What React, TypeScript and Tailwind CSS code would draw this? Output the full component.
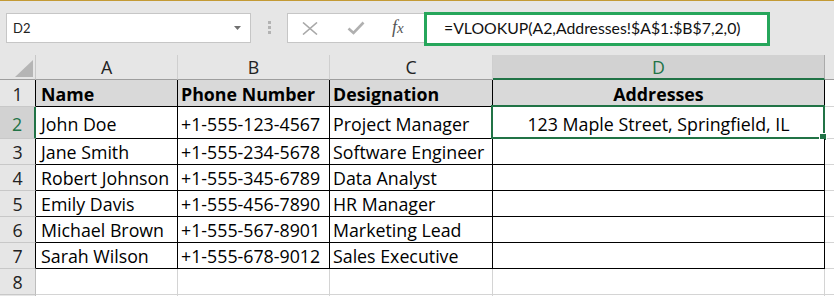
import React from "react";

const FONT = "font-['Open_Sans',sans-serif]";

type Row = { n: number; cells: string[] };

const rows: Row[] = [
  { n: 1, cells: ["Name", "Phone Number", "Designation", "Addresses"] },
  { n: 2, cells: ["John Doe", "+1-555-123-4567", "Project Manager", "123 Maple Street, Springfield, IL"] },
  { n: 3, cells: ["Jane Smith", "+1-555-234-5678", "Software Engineer", ""] },
  { n: 4, cells: ["Robert Johnson", "+1-555-345-6789", "Data Analyst", ""] },
  { n: 5, cells: ["Emily Davis", "+1-555-456-7890", "HR Manager", ""] },
  { n: 6, cells: ["Michael Brown", "+1-555-567-8901", "Marketing Lead", ""] },
  { n: 7, cells: ["Sarah Wilson", "+1-555-678-9012", "Sales Executive", ""] },
];

const padCol = ["pl-[5px]", "pl-[3px]", "pl-[3px]", "justify-center"];

function Toolbar() {
  return (
    <div className="h-[55px] flex flex-col">
      <div className="h-px bg-[#c39a35]" />
      <div className="flex items-start pt-[12px]">
        <div className="ml-[6px] w-[245px] h-[30px] bg-white border border-[#c6c6c6] flex items-center justify-between pl-[6px] pr-[9px]">
          <span className="text-[13px] text-[#222] font-['Lato',sans-serif] pt-px">D2</span>
          <svg width="7" height="4" viewBox="0 0 7 4">
            <path d="M0 0 L7 0 L3.5 4 Z" fill="#707070" />
          </svg>
        </div>
        <div className="ml-[17px] mt-[8px] flex flex-col gap-[2px]">
          <div className="w-[3px] h-[3px] bg-[#b3b3b3]" />
          <div className="w-[3px] h-[3px] bg-[#b3b3b3]" />
          <div className="w-[3px] h-[3px] bg-[#b3b3b3]" />
        </div>
        <div className="ml-[16px] w-[137px] h-[30px] bg-white border border-[#c6c6c6] border-r-0 flex items-center">
          <svg className="ml-[14px]" width="16" height="13" viewBox="0 0 16 13">
            <path d="M1 0.5 L15 12.5 M15 0.5 L1 12.5" stroke="#a8a8a8" strokeWidth="1.6" fill="none" />
          </svg>
          <svg className="ml-[29px]" width="18" height="14" viewBox="0 0 18 14">
            <path d="M1.5 7.5 L6.5 12 L16.5 1.5" stroke="#b0b0b0" strokeWidth="2.6" fill="none" />
          </svg>
          <span className="ml-[27px] text-[18px] italic text-[#555] font-['Liberation_Serif',serif] leading-none -mt-[2px]">
            f<span className="text-[15px]">x</span>
          </span>
        </div>
        <div className="-mt-px w-[346px] h-[34px] bg-white border-[3px] border-[#26a65b] flex items-center pl-[17px] pb-[2px]">
          <span className="text-[15.8px] text-[#111] font-['Lato',sans-serif]">=VLOOKUP(A2,Addresses!$A$1:$B$7,2,0)</span>
        </div>
      </div>
    </div>
  );
}

const rowH: Record<number, string> = {
  1: "h-[27px]",
  2: "h-[32px]",
  3: "h-[26px]",
  4: "h-[26px]",
  5: "h-[26px]",
  6: "h-[26px]",
  7: "h-[26px]",
  8: "h-[26px]",
};

export default function App() {
  return (
    <div className={`w-[834px] h-[296px] bg-[#e6e6e6] overflow-hidden ${FONT}`}>
      <Toolbar />
      <div className="grid grid-cols-[36px_142px_152px_163px_332px_1fr] text-[17.8px]">
        <div className="h-[25px] border-r border-b border-[#9e9e9e] border-r-[#c8c8c8] flex items-end justify-end pr-[2px] pb-[2px]">
          <svg width="18" height="17" viewBox="0 0 18 17">
            <path d="M18 0 L18 17 L0 17 Z" fill="#b5b5b5" />
          </svg>
        </div>
        <div className="h-[25px] border-r border-r-[#cfcfcf] border-b border-b-[#9e9e9e] flex items-center justify-center text-[#222] pt-[1px]">A</div>
        <div className="h-[25px] border-r border-r-[#cfcfcf] border-b border-b-[#9e9e9e] flex items-center justify-center text-[#222] pt-[1px]">B</div>
        <div className="h-[25px] border-r border-r-[#cfcfcf] border-b border-b-[#9e9e9e] flex items-center justify-center text-[#222] pt-[1px]">C</div>
        <div className="h-[25px] bg-[#d2d2d2] border-r border-r-[#ababab] border-b-2 border-b-[#217346] flex items-center justify-center text-[#217346] pt-[2px]">D</div>
        <div className="h-[25px] border-b border-b-[#9e9e9e]" />

        {rows.map((r) => {
          const sel = r.n === 2;
          const head = r.n === 1;
          return (
            <React.Fragment key={r.n}>
              <div
                className={
                  sel
                    ? `${rowH[r.n]} bg-[#d2d2d2] border-r-2 border-r-[#217346] border-b border-b-[#c8c8c8] flex items-center justify-center text-[#217346] pt-[4px]`
                    : `${rowH[r.n]} border-r border-r-black border-b border-b-[#c8c8c8] flex items-center justify-center text-[#222] pt-[2px]`
                }
              >
                {r.n}
              </div>
              {r.cells.map((c, i) => {
                const isD = i === 3;
                return (
                  <div
                    key={i}
                    className={[
                      rowH[r.n],
                      "border-r border-b border-black flex items-center whitespace-nowrap overflow-visible relative",
                      head ? "bg-[#d9d9d9] font-bold" : "bg-white",
                      padCol[i],
                      sel ? "pt-[3px]" : "pt-[2px]",
                      "text-black",
                    ].join(" ")}
                  >
                    {c}
                    {sel && isD && (
                      <>
                        <div className="absolute -top-[2px] -left-[2px] -right-[1px] -bottom-[1px] border-2 border-[#217346] pointer-events-none" />
                        <div className="absolute -right-[3px] -bottom-[3px] w-[6px] h-[6px] bg-[#217346] border border-white box-content" />
                      </>
                    )}
                  </div>
                );
              })}
              <div className={`${rowH[r.n]} bg-white border-b border-b-[#d4d4d4]`} />
            </React.Fragment>
          );
        })}

        <div className="h-[26px] border-r border-r-[#bdbdbd] border-b border-b-[#c8c8c8] flex items-center justify-center text-[#222] pt-[2px]">8</div>
        <div className="h-[26px] bg-white border-r border-b border-[#d4d4d4]" />
        <div className="h-[26px] bg-white border-r border-b border-[#d4d4d4]" />
        <div className="h-[26px] bg-white border-r border-b border-[#d4d4d4]" />
        <div className="h-[26px] bg-white border-r border-b border-[#d4d4d4]" />
        <div className="h-[26px] bg-white border-b border-[#d4d4d4]" />

        <div className="h-[26px] border-r border-r-[#bdbdbd]" />
        <div className="h-[26px] bg-white border-r border-[#d4d4d4]" />
        <div className="h-[26px] bg-white border-r border-[#d4d4d4]" />
        <div className="h-[26px] bg-white border-r border-[#d4d4d4]" />
        <div className="h-[26px] bg-white border-r border-[#d4d4d4]" />
        <div className="h-[26px] bg-white" />
      </div>
    </div>
  );
}
